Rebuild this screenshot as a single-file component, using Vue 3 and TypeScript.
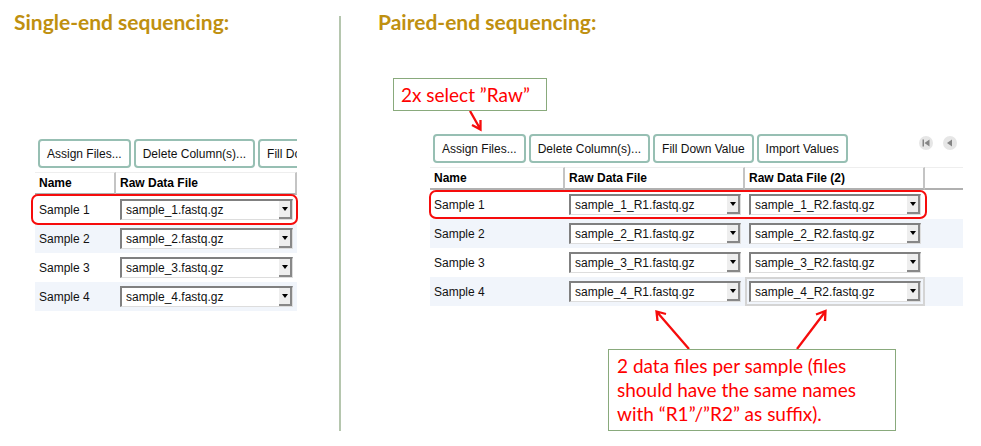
<script setup lang="ts">
import { reactive } from 'vue'

interface Sample {
  name: string
  files: string[]
}

interface Panel {
  id: string
  title: string
  actions: string[]
  columns: string[]
  samples: Sample[]
}

const numbers = [1, 2, 3, 4]

const single = reactive<Panel>({
  id: 'single',
  title: 'Single-end sequencing:',
  actions: ['Assign Files...', 'Delete Column(s)...', 'Fill Down Value'],
  columns: ['Raw Data File'],
  samples: numbers.map((n) => ({ name: `Sample ${n}`, files: [`sample_${n}.fastq.gz`] })),
})

const paired = reactive<Panel>({
  id: 'paired',
  title: 'Paired-end sequencing:',
  actions: ['Assign Files...', 'Delete Column(s)...', 'Fill Down Value', 'Import Values'],
  columns: ['Raw Data File', 'Raw Data File (2)'],
  samples: numbers.map((n) => ({
    name: `Sample ${n}`,
    files: [`sample_${n}_R1.fastq.gz`, `sample_${n}_R2.fastq.gz`],
  })),
})

const panels = [single, paired]

function options(panel: Panel, column: number): string[] {
  return numbers.map((n) =>
    panel.id === 'single' ? `sample_${n}.fastq.gz` : `sample_${n}_R${column + 1}.fastq.gz`,
  )
}
</script>

<template>
  <main class="page">
    <section v-for="panel in panels" :key="panel.id" class="panel" :class="panel.id">
      <h2 class="title">{{ panel.title }}</h2>

      <div v-if="panel.id === 'paired'" class="hint">
        <p class="callout">2x select ”Raw”</p>
        <svg class="hint-arrow" width="30" height="23" viewBox="0 0 30 23" aria-hidden="true">
          <path d="M7 0 L17.5 18.5 M9 14 L17.5 18.5 L17.5 9" />
        </svg>
      </div>

      <div class="bar">
        <div class="toolbar">
          <button v-for="action in panel.actions" :key="action" type="button" class="action">
            {{ action }}
          </button>
        </div>
        <div v-if="panel.id === 'paired'" class="pager">
          <button type="button" class="page-button" aria-label="First page">
            <svg width="8" height="8" viewBox="0 0 8 8" aria-hidden="true">
              <path d="M0.5 0.5h1.5v7h-1.5z M7.5 0.5v7L2.5 4z" />
            </svg>
          </button>
          <button type="button" class="page-button" aria-label="Previous page">
            <svg width="8" height="8" viewBox="0 0 8 8" aria-hidden="true">
              <path d="M6 0.5v7L1 4z" />
            </svg>
          </button>
        </div>
      </div>

      <div class="grid">
        <table class="samples">
          <thead>
            <tr>
              <th class="name" scope="col">Name</th>
              <th v-for="column in panel.columns" :key="column" class="file" scope="col">
                {{ column }}
              </th>
              <td v-if="panel.id === 'paired'"></td>
            </tr>
          </thead>
          <tbody>
            <tr v-for="(sample, row) in panel.samples" :key="sample.name" :class="{ marked: row === 0 }">
              <td class="name">{{ sample.name }}</td>
              <td v-for="(file, column) in sample.files" :key="column" class="file">
                <div class="combo" :class="{ focused: row === 3 && column === 1 }">
                  <select
                    v-model="sample.files[column]"
                    :aria-label="`${sample.name}, ${panel.columns[column]}`"
                  >
                    <option v-for="option in options(panel, column)" :key="option">{{ option }}</option>
                  </select>
                  <span class="drop" aria-hidden="true"></span>
                </div>
              </td>
              <td v-if="panel.id === 'paired'"></td>
            </tr>
          </tbody>
        </table>
      </div>

      <div v-if="panel.id === 'paired'" class="note">
        <svg class="note-arrows" width="288" height="43" viewBox="0 0 288 43" aria-hidden="true">
          <path d="M81 43 L49 6 M49.5 15 L48.5 5.5 L58 8" />
          <path d="M189 43 L217 6 M208 8.5 L217.5 5 L217 15" />
        </svg>
        <p class="callout">2 data files per sample (files should have the same names with “R1”/”R2” as suffix).</p>
      </div>
    </section>
  </main>
</template>

<style>
body {
  margin: 0;
  background: #fff;
}
</style>

<style scoped>
.page {
  display: grid;
  grid-template-columns: 340fr 641fr;
  padding-bottom: 15px;
  font: 12px/16px "Liberation Sans", Arial, sans-serif;
  color: #111;
}
.panel {
  position: relative;
  min-width: 0;
}
.single {
  padding-right: 43px;
}
.paired {
  padding-right: 18px;
}
.paired::before {
  content: "";
  position: absolute;
  top: 16px;
  bottom: 0;
  left: -1px;
  width: 2px;
  background: #b5c6ae;
}
.title {
  margin: 0;
  padding-top: 8px;
  font: bold 21px/28px Lato, Carlito, sans-serif;
  color: #bf9010;
  white-space: nowrap;
}
.single .title {
  padding-left: 14px;
}
.paired .title {
  padding-left: 38px;
}
.callout {
  box-sizing: border-box;
  margin: 0;
  padding: 4px 8px;
  border: 1px solid #89aa7c;
  background: #fff;
  font: 19px/24px Lato, Carlito, sans-serif;
  color: #f00;
}
.hint {
  width: 154px;
  margin: 42px 0 0 53px;
}
.hint .callout {
  padding: 4px 7px 3px;
}
.hint-arrow,
.note-arrows {
  display: block;
  fill: none;
  stroke: #f60c0c;
  stroke-width: 2.3;
}
.hint-arrow {
  margin-left: 70px;
}
.bar {
  display: flex;
  justify-content: space-between;
  margin-bottom: 4px;
}
.single .bar {
  margin-top: 103px;
  margin-left: 38px;
}
.paired .bar {
  margin-left: 93px;
}
.toolbar {
  display: flex;
  gap: 3px;
  min-width: 0;
  overflow: hidden;
}
.action {
  flex: none;
  height: 29px;
  padding: 0 7px;
  border: 2px solid #97bfb3;
  border-radius: 4px;
  background: #fff;
  font: inherit;
  color: inherit;
  white-space: nowrap;
}
.pager {
  flex: none;
  display: flex;
  gap: 10px;
  padding: 2px 6px 0 0;
}
.page-button {
  display: grid;
  place-items: center;
  width: 14px;
  height: 14px;
  padding: 0;
  border: 0;
  border-radius: 50%;
  background: #e6e6e6;
}
.page-button svg {
  fill: #858585;
}
.single .grid {
  padding-left: 35px;
}
.paired .grid {
  padding-left: 90px;
}
.samples {
  width: 100%;
  table-layout: fixed;
  border-collapse: separate;
  border-spacing: 0;
}
.samples th,
.samples td {
  box-sizing: border-box;
  padding: 0 4px;
  text-align: left;
}
.samples thead th,
.samples thead td {
  height: 23px;
  border-top: 1px solid #eee;
  border-bottom: 2px solid #b0b0b0;
}
.samples thead th {
  border-right: 2px solid #c4c4c4;
  color: #000;
}
.samples tbody td {
  height: 29px;
}
.samples tbody tr:nth-child(even) {
  background: #f1f5fb;
}
.single th.name {
  width: 81px;
}
.paired th.name {
  width: 135px;
}
.paired th.file {
  width: 180px;
}
.marked {
  position: relative;
}
.marked .name::after {
  content: "";
  position: absolute;
  inset: 0 36px 0 -1px;
  border: 2px solid #f60c0c;
  border-radius: 7px;
  pointer-events: none;
}
.single .marked .name::after {
  inset: -1px -1px -1px -4px;
}
.combo {
  display: grid;
  grid-template-columns: minmax(0, 1fr) 13px;
  box-sizing: border-box;
  height: 21px;
  border: 1px solid #ddd;
  border-top: 2px solid #808080;
  border-left: 2px solid #808080;
  background: #fff;
}
.combo.focused {
  outline: 2px solid #d4d4d4;
  outline-offset: 2px;
}
.combo select {
  grid-area: 1 / 1 / 2 / 3;
  min-width: 0;
  margin: 0;
  padding: 0 14px 0 4px;
  border: 0;
  appearance: none;
  background: transparent;
  font: 12px/16px "Liberation Sans", Arial, sans-serif;
  color: inherit;
}
.drop {
  grid-area: 1 / 2 / 2 / 3;
  display: grid;
  place-items: center;
  border-right: 2px solid #888;
  border-bottom: 2px solid #888;
  background: #eee;
  pointer-events: none;
}
.drop::after {
  content: "";
  border: 3px solid transparent;
  border-top: 4px solid #000;
  border-bottom: 0;
}
.note {
  width: 288px;
  margin-left: 268px;
}
</style>
